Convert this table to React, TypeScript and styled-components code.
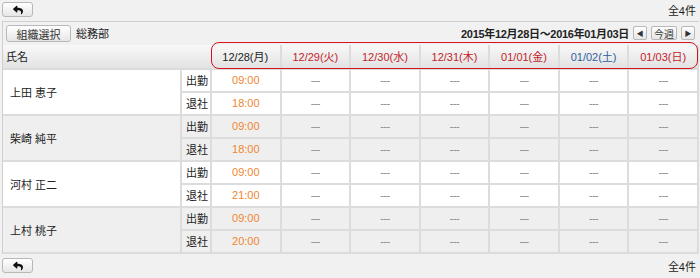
import styled, { createGlobalStyle } from 'styled-components'
import { FaReply } from 'react-icons/fa'

const GlobalStyle = createGlobalStyle`
  body {
    margin: 0;
    background: #f1f1f1;
    font-family: "Liberation Sans", "Noto Sans CJK JP", sans-serif;
    font-size: 11px;
    color: #222;
  }
`

const Page = styled.div`
  width: 700px;
  height: 278px;
  display: flex;
  flex-direction: column;
`

const Bar = styled.div<{ $top?: boolean }>`
  display: flex;
  justify-content: space-between;
  align-items: ${(p) => (p.$top ? 'flex-start' : 'center')};
  height: ${(p) => (p.$top ? '21px' : '25px')};
  padding: ${(p) => (p.$top ? '2px 4px 0 2px' : '0 4px 0 2px')};
  box-sizing: border-box;
`

const Count = styled.span<{ $top?: boolean }>`
  font-size: 11px;
  margin-top: ${(p) => (p.$top ? '0' : '0')};
`

const Btn = styled.button`
  display: flex;
  align-items: center;
  justify-content: center;
  height: 15px;
  padding: 0 6px;
  border: 1px solid #b8b8b8;
  border-radius: 3px;
  background: linear-gradient(#ffffff, #e6e6e6);
  font-family: inherit;
  font-size: 11px;
  color: #333;
  white-space: nowrap;
  cursor: pointer;
`

const BackBtn = styled(Btn)`
  width: 31px;
  height: 15px;
  svg {
    font-size: 10px;
    color: #111;
  }
`

const Panel = styled.div`
  position: relative;
  margin-left: 2px;
  width: 696px;
  border-top: 1px solid #cfcfcf;
  border-left: 1px solid #cfcfcf;
`

const Toolbar = styled.div`
  display: flex;
  align-items: center;
  height: 23px;
  padding: 0 4px 0 3px;
`

const OrgBtn = styled(Btn)`
  width: 65px;
  height: 17px;
  margin-top: 1px;
`

const OrgName = styled.span`
  margin-left: 5px;
`

const Range = styled.span`
  margin-left: auto;
  font-weight: bold;
  font-size: 11px;
  letter-spacing: -0.3px;
`

const NavBtn = styled(Btn)<{ $wide?: boolean }>`
  height: 14px;
  margin-left: 4px;
  padding: 0;
  width: ${(p) => (p.$wide ? '26px' : '14px')};
  font-size: ${(p) => (p.$wide ? '10px' : '7px')};
  border-radius: 2px;
`

const Table = styled.table`
  border-collapse: collapse;
  table-layout: fixed;
  width: 696px;
`

const Head = styled.th<{ $color?: string; $left?: boolean }>`
  height: 23px;
  padding: 0;
  font-weight: normal;
  font-size: 11px;
  color: ${(p) => p.$color || '#222'};
  text-align: ${(p) => (p.$left ? 'left' : 'center')};
  padding-left: ${(p) => (p.$left ? '3px' : '0')};
  background: linear-gradient(#f8f8f8, #e3e3e3);
  border-right: ${(p) => (p.$left ? 'none' : '2px solid #dcdcdc')};
  border-bottom: 1px solid #cfcfcf;
`

const Row = styled.tr<{ $alt: boolean }>`
  background: ${(p) => (p.$alt ? '#efefef' : '#ffffff')};
`

const Cell = styled.td<{ $kind: 'name' | 'label' | 'time' | 'empty' }>`
  height: 21px;
  padding: 0;
  border: 2px solid #dcdcdc;
  border-left: ${(p) => (p.$kind === 'name' ? '0' : '2px solid #dcdcdc')};
  text-align: ${(p) => (p.$kind === 'name' || p.$kind === 'label' ? 'left' : 'center')};
  padding-left: ${(p) => (p.$kind === 'name' ? '7px' : p.$kind === 'label' ? '4px' : '0')};
  color: ${(p) => (p.$kind === 'time' ? '#f0862f' : p.$kind === 'empty' ? '#8a8a8a' : '#222')};
  letter-spacing: ${(p) => (p.$kind === 'empty' ? '-0.6px' : '0')};
  font-size: 11px;
`

const Highlight = styled.div`
  position: absolute;
  left: 208px;
  top: 20px;
  width: 485px;
  height: 25px;
  border: 1.5px solid #d3141e;
  border-radius: 8px;
  pointer-events: none;
`

const days = [
  { d: '12/28(月)', c: '#222' },
  { d: '12/29(火)', c: '#c3232b' },
  { d: '12/30(水)', c: '#c3232b' },
  { d: '12/31(木)', c: '#c3232b' },
  { d: '01/01(金)', c: '#c3232b' },
  { d: '01/02(土)', c: '#2f5e9e' },
  { d: '01/03(日)', c: '#c3232b' },
]

const staff = [
  { name: '上田 恵子', in: '09:00', out: '18:00' },
  { name: '柴崎 純平', in: '09:00', out: '18:00' },
  { name: '河村 正二', in: '09:00', out: '21:00' },
  { name: '上村 桃子', in: '09:00', out: '20:00' },
]

function App() {
  return (
    <Page>
      <GlobalStyle />
      <Bar $top>
        <BackBtn>
          <FaReply />
        </BackBtn>
        <Count $top>全4件</Count>
      </Bar>
      <Panel>
        <Toolbar>
          <OrgBtn>組織選択</OrgBtn>
          <OrgName>総務部</OrgName>
          <Range>2015年12月28日〜2016年01月03日</Range>
          <NavBtn>◀</NavBtn>
          <NavBtn $wide>今週</NavBtn>
          <NavBtn>▶</NavBtn>
        </Toolbar>
        <Table>
          <colgroup>
            <col style={{ width: 178 }} />
            <col style={{ width: 30 }} />
            {days.map((x) => (
              <col key={x.d} />
            ))}
          </colgroup>
          <thead>
            <tr>
              <Head colSpan={2} $left>
                氏名
              </Head>
              {days.map((x) => (
                <Head key={x.d} $color={x.c}>
                  {x.d}
                </Head>
              ))}
            </tr>
          </thead>
          <tbody>
            {staff.flatMap((s, i) => [
              <Row key={s.name + 'in'} $alt={i % 2 === 1}>
                <Cell $kind="name" rowSpan={2}>
                  {s.name}
                </Cell>
                <Cell $kind="label">出勤</Cell>
                <Cell $kind="time">{s.in}</Cell>
                {days.slice(1).map((x) => (
                  <Cell key={x.d} $kind="empty">
                    ---
                  </Cell>
                ))}
              </Row>,
              <Row key={s.name + 'out'} $alt={i % 2 === 1}>
                <Cell $kind="label">退社</Cell>
                <Cell $kind="time">{s.out}</Cell>
                {days.slice(1).map((x) => (
                  <Cell key={x.d} $kind="empty">
                    ---
                  </Cell>
                ))}
              </Row>,
            ])}
          </tbody>
        </Table>
        <Highlight />
      </Panel>
      <Bar>
        <BackBtn>
          <FaReply />
        </BackBtn>
        <Count>全4件</Count>
      </Bar>
    </Page>
  )
}

export default App
